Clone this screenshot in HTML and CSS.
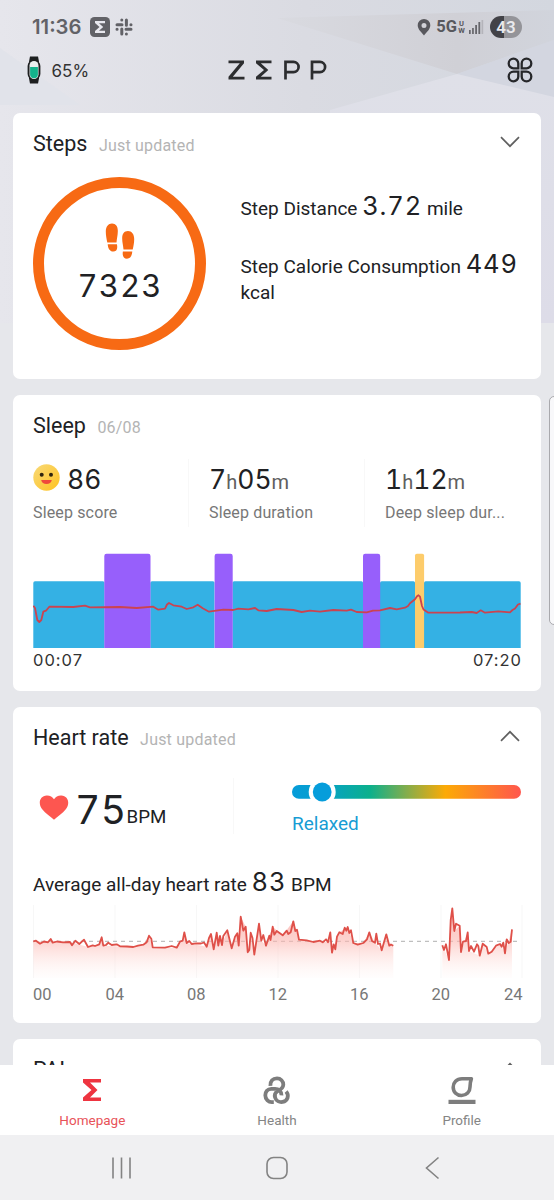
FILE: index.html
```html
<!DOCTYPE html>
<html lang="en">
<head>
<meta charset="utf-8">
<title>Zepp</title>
<link rel="stylesheet" href="styles.css">
</head>
<body>
<div class="phone">
  <svg class="backdrop" viewBox="0 0 554 323" width="554" height="323" aria-hidden="true">
    <defs>
      <linearGradient id="sky" x1="0" y1="0" x2="1" y2="0"><stop offset="0" stop-color="#e6e6ec"/><stop offset=".55" stop-color="#dadbe2"/><stop offset="1" stop-color="#d3d7df"/></linearGradient>
      <linearGradient id="facet" x1="0" y1="0" x2="1" y2="0"><stop offset="0" stop-color="#d9dae0"/><stop offset=".65" stop-color="#d0d0d6"/><stop offset="1" stop-color="#d1d4dc"/></linearGradient>
      <linearGradient id="low" x1="0" y1="0" x2="0" y2="1"><stop offset="0" stop-color="#dfe0e8"/><stop offset="1" stop-color="#dddce8"/></linearGradient>
    </defs>
    <rect width="554" height="323" fill="url(#sky)"/>
    <path d="M0 48 80 105 0 105Z" fill="#e1e3ea"/>
    <path d="M277 18 554 10 554 40 457 74Z" fill="url(#facet)"/>
    <path d="M457 74 554 40 554 98Z" fill="#d3d6e0"/>
    <path d="M330 110 457 74 554 97 554 323 330 323Z" fill="url(#low)"/>
  </svg>

  <header class="status">
    <span class="clock">11:36</span>
    <svg class="notif" width="20" height="20" viewBox="0 0 20 20"><rect width="20" height="20" rx="4.5" fill="#626267"/><path d="M5 4H15V6.200H9L13.200 10 9 13.800H15V16H5V13.900L9.500 10 5 6.100Z" fill="#e8e8ee"/></svg>
    <svg class="slack" width="18" height="18" viewBox="0 0 18 18" fill="none" stroke="#626267" stroke-width="3" stroke-linecap="round"><path d="M6.8 2v.1M11.4 2v5.2M2 6.7H7M16 6.7h-.1M2 11.3h.1M11 11.3h5M6.8 11v5M11.4 16v-.1"/></svg>
    <span class="grow"></span>
    <svg class="pin" width="14" height="17" viewBox="0 0 14 17"><path fill-rule="evenodd" d="M7 0a6.3 6.3 0 0 0-6.3 6.3C.7 10.4 4.4 13.200 7 16.500c2.600-3.300 6.300-6.100 6.300-10.200A6.300 6.300 0 0 0 7 0Zm0 3.900a2.500 2.500 0 1 1 0 5 2.500 2.500 0 0 1 0-5Z" fill="#58585d"/></svg>
    <span class="net">5G</span>
    <span class="uw"><span>U</span><span>W</span></span>
    <svg class="signal" width="15" height="16" viewBox="0 0 15 16"><path d="M0 11h1.700v4H0ZM3.100 9h1.700v6H3.100ZM6.200 6h1.800v9H6.200ZM9.400 3h1.800v12H9.400Z" fill="#66666b"/><path d="M12.500 1h1.700v14h-1.700Z" fill="#b4b4ba"/></svg>
    <span class="battery">43</span>
  </header>

  <div class="appbar">
    <svg class="band" width="14" height="28" viewBox="0 0 14 28"><path d="M3 .5h8l1 5v17l-1 5H3l-1-5v-17Z" fill="#1d1f20"/><rect x=".6" y="4" width="12.800" height="20" rx="6" fill="#1d1f20"/><rect x="2.500" y="5" width="9" height="18" rx="4.500" fill="#e9eeee"/><path d="M3.100 11h7.800v7.300a3.900 3.900 0 0 1-7.800 0Z" fill="#14b38c"/></svg>
    <span class="pct">65%</span>
    <svg class="logo" width="100" height="20" viewBox="228 60 100 20" role="img" aria-label="ZEPP"><path fill="#2c2d2f" d="M228.500 60.500H244V63.200L232.800 76.800H244.500V79.500H228.500V76.800L239.800 63.200H228.500ZM256 60.500H271.500V63.200H260.800L268.300 70 260.800 76.800H271.500V79.500H256V76.800L264 70 256 63.200Z"/><path fill="none" stroke="#2c2d2f" stroke-width="2.700" d="M285.500 79.500V61.900H293.500a4.900 4.900 0 0 1 0 10.200H285.500M312 79.500V61.900H320a4.900 4.900 0 0 1 0 10.200H312"/></svg>
    <svg class="clover" width="26" height="26" viewBox="0 0 26 26" fill="none" stroke="#26272a" stroke-width="2.300"><path d="M11.300 11.300H6.500a4.800 4.800 0 1 1 4.800-4.800ZM14.700 11.300h4.800a4.800 4.800 0 1 0-4.800-4.800ZM11.300 14.700H6.500a4.800 4.800 0 1 0 4.800 4.800ZM14.700 14.700h4.800a4.800 4.800 0 1 1-4.800 4.800Z"/></svg>
  </div>

  <main class="feed">
    <section class="card steps">
      <div class="head"><h2>Steps</h2><span class="note">Just updated</span><svg class="chev" width="20" height="12" viewBox="0 0 20 12"><path d="M1 1.200 10 10.200 19 1.200"/></svg></div>
      <div class="steps-body">
        <div class="ring">
          <svg width="30" height="37" viewBox="0 0 30 37" fill="#f76a14"><path d="M7 .5c4 0 6 3.200 5.800 8 0 4-1 7-1.300 11H2.300C1.500 16 .8 12 .8 8.500.8 3.500 3.300.5 7 .5ZM2.700 21.200h9.200c1.100 4.500-.4 7.300-3.700 7.300S3 25.500 2.700 21.200ZM23 8c3.700 0 6.200 3 6.200 8 0 3.500-.7 7-1.500 10.500h-9.200c-.3-4-1.300-7-1.300-10.500C17 11 19 8 23 8ZM17.900 28.500h9.400c-.3 4-2 7.200-5.300 7.200s-4.900-2.800-4.100-7.200Z"/></svg>
          <span class="count">7323</span>
        </div>
        <div class="facts">
          <p class="dist">Step Distance <b>3.72</b> mile</p>
          <p>Step Calorie Consumption <b>449</b><br>kcal</p>
        </div>
      </div>
    </section>

    <section class="card sleep">
      <div class="head"><h2>Sleep</h2><span class="note">06/08</span></div>
      <div class="stats">
        <div class="stat">
          <div class="val"><svg class="face" width="27" height="27" viewBox="0 0 27 27"><defs><linearGradient id="face" x1="0" y1="0" x2="1" y2="1"><stop offset="0" stop-color="#f8d978"/><stop offset="1" stop-color="#ffc321"/></linearGradient></defs><circle cx="13.500" cy="13.500" r="13.200" fill="url(#face)"/><circle cx="8.700" cy="10.800" r="2" fill="#30250f"/><circle cx="18" cy="10.800" r="2" fill="#30250f"/><path d="M8.200 16h10.600c-.4 2.500-2.500 4-5.300 4s-4.900-1.500-5.300-4Z" fill="#ef493c"/></svg>86</div>
          <div class="lab">Sleep score</div>
        </div>
        <div class="stat"><div class="val">7<i>h</i>05<i>m</i></div><div class="lab">Sleep duration</div></div>
        <div class="stat"><div class="val">1<i>h</i>12<i>m</i></div><div class="lab">Deep sleep dur...</div></div>
      </div>
      <svg class="sleep-chart" width="488" height="96" viewBox="33 553 488 96">
        <g fill="#34b1e4"><path d="M33.300 648V583a1.700 1.700 0 0 1 1.700-1.700H103a1.500 1.500 0 0 1 1.500 1.500V648ZM150.300 648V583a1.700 1.700 0 0 1 1.700-1.700H213a1.500 1.500 0 0 1 1.500 1.500V648ZM232.500 648V583a1.700 1.700 0 0 1 1.700-1.700H361.500a1.500 1.500 0 0 1 1.500 1.500V648ZM380 648V583a1.700 1.700 0 0 1 1.700-1.700H413.500a1.500 1.500 0 0 1 1.500 1.500V648ZM424 648V583a1.700 1.700 0 0 1 1.700-1.700H519a1.700 1.700 0 0 1 1.700 1.700V648Z"/></g>
        <path fill="#975ffb" d="M104.300 648V556a2.200 2.200 0 0 1 2.200-2.200H148.300a2.200 2.200 0 0 1 2.200 2.200V648ZM214.600 648V556a2.200 2.200 0 0 1 2.200-2.200H230.500a2.200 2.200 0 0 1 2.200 2.200V648ZM363 648V556a2.200 2.200 0 0 1 2.200-2.200H378a2.200 2.200 0 0 1 2.200 2.200V648Z"/>
        <path fill="#fdcc6b" d="M415 648V555.500a1.800 1.800 0 0 1 1.800-1.800H422.300a1.800 1.800 0 0 1 1.800 1.800V648Z"/>
        <polyline class="trace" stroke="#cb4350" points="33.300,605.700 35,608 37.300,620 39.300,622 41.300,620 43.300,611.700 46,610.700 49.300,606.700 73.300,607 85,605.700 90,607.300 120,607 136.700,608 153.300,606.700 158.300,609.700 165,608.700 167,604.500 169,603 173.300,605.300 181.700,606.700 186.700,609 193.300,607.300 197.700,604.700 202.700,608.300 209,611.700 223.300,609.700 233.300,610 238.300,608.700 248.300,609.300 255,608 258.300,610.300 266.700,611 276.700,609 293.300,610 301.700,612 310,610.700 320,611.700 333.300,610 346.700,610.700 351,609.700 356.700,612 366.700,612.300 373,610.700 380,610.300 390,608 396.700,609.300 405,607.700 408,606 410,603.300 415,599.300 417,596.300 418.500,595.300 420,596.700 422,606 423.500,609.500 428.300,612.700 460,612.500 471.700,612 476.700,613 480.700,610.300 485,612.700 498.300,611.300 510,612.300 512.500,610 515,608.500 518,604.500 520.500,603.700"/>
      </svg>
      <div class="span"><span>00:07</span><span>07:20</span></div>
    </section>

    <section class="card heart">
      <div class="head"><h2>Heart rate</h2><span class="note">Just updated</span><svg class="chev" width="20" height="12" viewBox="0 0 20 12"><path d="M1 10.800 10 1.800 19 10.800"/></svg></div>
      <div class="now">
        <div class="bpm">
          <svg width="30" height="25" viewBox="0 0 30 25"><path d="M15 24.700C12 22.200 6.500 18.500 3 14-1 9 .3 1 7.800.6 11 .5 13.500 2 15 4.200 16.500 2 19 .5 22.200.6 29.700 1 31 9 27 14 23.500 18.500 18 22.200 15 24.700Z" fill="#fd5650"/></svg>
          <span class="big">75</span><span class="unit">BPM</span>
        </div>
        <div class="zone">
          <svg width="230" height="20" viewBox="0 0 230 20"><defs><linearGradient id="zone"><stop offset="0" stop-color="#069cda"/><stop offset=".14" stop-color="#07a1c9"/><stop offset=".34" stop-color="#0bb08c"/><stop offset=".5" stop-color="#83ad4c"/><stop offset=".67" stop-color="#fcaa06"/><stop offset="1" stop-color="#ff564d"/></linearGradient></defs><rect x="0" y="3" width="229" height="13.800" rx="6.900" fill="url(#zone)"/><circle cx="30.200" cy="10" r="13.500" fill="#fff"/><circle cx="30.200" cy="10" r="9.400" fill="#069ddb"/></svg>
          <div class="mood">Relaxed</div>
        </div>
      </div>
      <p class="avg">Average all-day heart rate <b>83</b> BPM</p>
      <svg class="heart-chart" width="490" height="76" viewBox="33 904 490 76">
        <defs><linearGradient id="fade" gradientUnits="userSpaceOnUse" x1="0" y1="910" x2="0" y2="979"><stop offset="0" stop-color="#f9a8a3" stop-opacity=".8"/><stop offset=".45" stop-color="#fcb6b0" stop-opacity=".6"/><stop offset="1" stop-color="#fff0ee" stop-opacity=".1"/></linearGradient></defs>
        <path d="M33.500 905v73M115 905v73M196.500 905v73M278 905v73M359.500 905v73M441 905v73M522 905v73" stroke="#f7f7f7"/>
        <path d="M33 941.300H521" stroke="#b0b0b0" stroke-dasharray="4 4"/>
        <path fill="url(#fade)" d="M33.300 978V941.300L70 942 88 947 99.300 944.300 101.700 937.300 103.300 945.700 133 947 143.300 944.700 149 935.700 152.700 947.300 176.700 947.700 182.700 940.700 184.300 932.300 186.700 943 206.700 946.700 211 934 213.700 949.300 216.700 932.700 222 945 227.300 930.300 231.700 948.300 237.300 933.300 238.700 945.700 240.700 916.700 245.700 926.700 247.700 952.300 250.700 932.700 254.300 954.700 259 923.700 261.300 940.700 266 945.700 272.700 926.700 282.700 935.300 293.300 921.300 299 939.700 328 942.300 330.300 932.300 332 952.700 339.300 932.300 347.700 927 353.300 943 363.300 943 369.300 932.300 375 942.700 381.700 950.300 386.300 934.300 389.300 945.700 393.300 945.700V978ZM442.300 978V945.300L449 960 450.700 920 452.300 908.300 454.300 931 459.700 925.700 461 952 467.700 932.300 469 951 479.700 955.700 482.700 943.700 488.300 953.700 500 944 505 953.300 512 929.300V978Z"/>
        <g class="trace" stroke="#df5049">
          <polyline points="33.300,941.300 36,940.700 40,943.700 44,941.500 48,942.300 50.700,939 52.700,942.700 57,941.500 63,942.300 70,942 72,945.300 75.300,940.700 79.300,944 84,939.700 88,947 92.700,945.300 95,946 99.300,944.300 101.700,937.300 103.300,945.700 106,945 108.300,942.700 111.700,945 116.700,944.300 120,946.300 127,946.500 133.300,947 138,945.700 143.300,944.700 146.700,942.300 149,935.700 151.300,938.700 152.700,947.300 165,947.700 171.700,946 176.700,947.700 180,941.700 182.700,940.700 184.300,932.300 186.700,943 189.300,941 191.700,944 196,943.300 201,943.500 204,942.500 206.700,946.700 209,938 211,934 213.700,949.300 216.700,932.700 218.300,945.700 220,936 222,945 223.300,936 227.300,930.300 231.700,948.300 235,936.700 237.300,933.300 238.700,945.700 240.700,916.700 243.300,930.700 245.700,926.700 247.700,952.300 249.300,950 250.700,932.700 252.500,938 254.300,954.700 259,923.700 261.300,940.700 263.300,935 266,945.700 269.300,935.700 270.500,940 272.700,926.700 274.300,934.700 276.700,931 282.700,935.300 286.700,930.700 288.300,934 290.700,932.300 293.300,921.300 295.300,931 297,929.700 299,939.700 306.700,940.300 313.300,942 320,940.700 322.700,942.300 326,939.300 328,942.300 330.300,932.300 332,952.700 333.700,944.300 335.300,949.300 337,936.700 339.300,932.300 342.700,934 344.700,927.700 346.300,930.700 347.700,927 349.300,933 351,930.300 353.300,943 357.700,944.700 363.300,943 367,939.300 369.300,932.300 372,941 375,942.700 376.300,933.700 378,944 380,943.500 381.700,950.300 383.700,943.300 386.300,934.300 389.300,945.700 391,944.500 393.300,945.700"/>
          <polyline points="442.300,945.300 444,950 446,944.300 449,960 450.700,920 452.300,908.300 454.300,931 456,923.700 459.700,925.700 461,952 463,941.700 466,941 467.700,932.300 469,951 471,946 474,951.700 477,944.300 478.300,946 479.700,955.700 482.700,943.700 486.700,947 488.300,953.700 491.700,951.700 496,945.700 500,944 501.700,946.700 503.300,942.700 505,953.300 506.700,939.300 508.700,943 510.700,941.700 512,929.300"/>
        </g>
      </svg>
      <div class="hours"><span>00</span><span>04</span><span>08</span><span>12</span><span>16</span><span>20</span><span>24</span></div>
    </section>

    <section class="card pai">
      <div class="head"><h2>PAI</h2><span class="note">Just updated</span><svg class="chev" width="20" height="12" viewBox="0 0 20 12"><path d="M1 10.800 10 1.800 19 10.800"/></svg></div>
    </section>
  </main>

  <nav class="tabs">
    <a class="tab active"><svg width="30" height="30" viewBox="0 0 30 30"><path d="M6 4H24V7.500H13L20.500 15 13 22.500H24V26H6V22.500L14.500 15 6 7.500Z" fill="#ee3440"/></svg><span>Homepage</span></a>
    <a class="tab"><svg width="30" height="30" viewBox="0 0 30 30" fill="none" stroke="#7d7d7d" stroke-width="3.800"><path d="M8.400 10.800C8.100 6 10.800 3.400 15 3.400c3.700 0 6.400 2.800 6.300 6.300-.1 3-2.500 5-6 6.500-2.200 1.500-2.900 4-2.200 6.300 1 3.300 4.300 5 7.500 4.400 5-1 7-6.500 3.500-10.500M19.500 20.400c.1-4-2.800-6.600-6.500-6.600H9.300C5.500 13.800 3.300 16.800 3.300 20.300c0 4.300 3.300 7 6.900 6.800h1.600"/></svg><span>Health</span></a>
    <a class="tab"><svg width="30" height="30" viewBox="0 0 30 30"><path d="M24.400 3.700H15c-5.500 0-8.800 3.800-8.800 8.500 0 5 3.700 8.300 8.300 8.300 5 0 8.500-3.600 8.500-8.500 0-3.300.4-5.500 1.400-8.300Z" fill="none" stroke="#7d7d7d" stroke-width="3.600" stroke-linejoin="round"/><path d="M1.500 24.800h27v4.200h-27Z" fill="#7d7d7d"/></svg><span>Profile</span></a>
  </nav>
  <div class="sysnav">
    <svg width="22" height="24" viewBox="0 0 22 24"><path d="M2 1.500v21M10.500 1.500v21M19 1.500v21"/></svg>
    <svg width="22" height="24" viewBox="0 0 22 24"><rect x="1" y="1.500" width="20" height="21" rx="6.500"/></svg>
    <svg width="22" height="24" viewBox="0 0 22 24"><path d="M17.500 1.500 5.500 12 17.500 22.500"/></svg>
  </div>
  <div class="edge"></div>
</div>
</body>
</html>
```
FILE: styles.css
```css
* { box-sizing: border-box; }
body { margin: 0; font-family: Roboto, "Liberation Sans", sans-serif; color: #202124; }
h2, p { margin: 0; font-weight: 400; }
svg { display: block; flex: none; }
.phone { position: relative; width: 554px; height: 1200px; overflow: hidden; background: #e6e7eb; display: flex; flex-direction: column; }
.backdrop { position: absolute; left: 0; top: 0; }
.status, .appbar, .feed, .tabs, .sysnav { position: relative; }

.status { height: 54px; padding: 0 32px; display: flex; align-items: center; color: #626267; }
.clock { font: 600 20.3px/24px Inter, sans-serif; width: 58px; white-space: nowrap; }
.slack { margin-left: 5px; }
.grow { flex: 1; }
.pin { margin-right: 5px; }
.net { font-size: 16.5px; font-weight: 700; color: #58585d; line-height: 20px; }
.uw { display: flex; flex-direction: column; font-size: 7.5px; line-height: 7px; font-weight: 700; margin: 0 4px 0 1px; width: 7px; align-items: center; color: #58585d; }
.signal { margin-right: 6px; }
.battery { width: 32px; height: 22px; border-radius: 11px; background: linear-gradient(90deg, #424247 43%, #949499 43%); color: #e9e9ed; font: 600 17px/22px Roboto, sans-serif; text-align: center; }

.appbar { height: 59px; padding: 2px 21px 0 27px; display: flex; align-items: flex-start; }
.pct { font: 400 17px/30px Inter, sans-serif; margin-left: 10.5px; width: 176px; color: #333; }
.logo { margin-top: 4px; }
.clover { margin: 1px 0 0 auto; }

.feed { height: 952px; padding: 0 13px; display: flex; flex-direction: column; gap: 16px; overflow: hidden; }
.card { flex: none; background: #fff; border-radius: 7px; padding: 19px 20px 0; }
.steps { height: 266px; }
.sleep { height: 296px; }
.heart { height: 316px; }
.pai { height: 120px; }
.head { display: flex; height: 24px; align-items: baseline; line-height: 24px; }
.head h2 { font-size: 21.5px; }
.note { margin-left: 11.5px; font-size: 16px; color: #b4b4b4; letter-spacing: 0.2px; }
.chev { margin: 4px 1.5px 0 auto; align-self: flex-start; fill: none; stroke: #606060; stroke-width: 1.7; }

.steps-body { display: flex; margin-top: 21px; }
.ring { width: 173px; height: 173px; border: 11px solid #f76a14; border-radius: 50%; display: flex; flex-direction: column; align-items: center; padding-top: 35px; }
.count { font: 400 31px/38px Inter, sans-serif; font-feature-settings: "tnum"; letter-spacing: 1.1px; margin-top: 7px; padding-left: 1px; }
.facts { margin-left: 34.5px; font-size: 19px; line-height: 26px; white-space: nowrap; }
.dist { margin: 16px 0 28.5px; }
.facts b, .avg b { font: 400 25.5px/26px Inter, sans-serif; font-feature-settings: "tnum"; letter-spacing: 0.9px; }

.stats { display: flex; margin-top: 21px; height: 93px; }
.stat { width: 156px; margin-right: 20px; flex: none; border-right: 1px solid #f8f8f8; height: 68px; }
.stat:last-child { border: 0; width: 136px; margin-right: 0; }
.val { display: flex; align-items: baseline; font: 400 26.5px/32px Inter, sans-serif; font-feature-settings: "tnum"; height: 36px; padding-top: 4px; }
.val i { font: 400 20px/32px Roboto, sans-serif; color: #606060; }
.face { align-self: flex-start; margin: 1px 7px 0 0; }
.lab { font-size: 16px; line-height: 20px; color: #777; margin-top: 8px; letter-spacing: 0.15px; }
.sleep-chart { margin-top: 1px; }
.trace { fill: none; stroke-width: 1.8; stroke-linejoin: round; }
.span { display: flex; justify-content: space-between; font: 400 16.5px/23px Inter, sans-serif; color: #333; letter-spacing: 1px; margin-right: -1px; }

.now { display: flex; height: 76px; margin-top: 28px; }
.bpm { display: flex; width: 201px; height: 56px; border-right: 1px solid #f8f8f8; padding: 17px 0 0 6px; align-items: flex-start; }
.big { font: 400 39px/38px Inter, sans-serif; font-feature-settings: "tnum"; margin: -4px 0 0 6px; letter-spacing: 0.5px; }
.unit { font-size: 18.7px; line-height: 20px; margin-top: 12px; }
.zone { margin-left: 58px; padding-top: 4px; }
.bpm, .zone { flex: none; }
.mood { color: #179cd4; font-size: 19px; line-height: 24px; margin-top: 10px; }
.avg { font-size: 19px; line-height: 28px; margin-top: 15px; white-space: nowrap; }
.heart-chart { margin-top: 5px; }
.hours { display: grid; grid-template-columns: 41px repeat(5, 81.5px) 41px; font-size: 16.5px; line-height: 20px; color: #777; margin-top: 5px; text-align: center; }
.hours span:first-child { text-align: left; }
.hours span:last-child { text-align: right; }

.tabs { height: 70px; background: #fff; display: flex; padding-top: 10px; }
.tab { flex: 1; display: flex; flex-direction: column; align-items: center; color: #858585; font-size: 13.5px; line-height: 16px; gap: 7px; }
.tab.active { color: #e85359; }
.sysnav { height: 65px; background: #f0f0f2; display: flex; justify-content: space-between; padding: 21px 111px 0; }
.sysnav svg { fill: none; stroke: #838383; stroke-width: 1.6; }
.edge { position: absolute; right: -10px; top: 396px; width: 15px; height: 229px; border: 1px solid #a9a9ad; border-radius: 5px; background: #f8f8fa; }
```
